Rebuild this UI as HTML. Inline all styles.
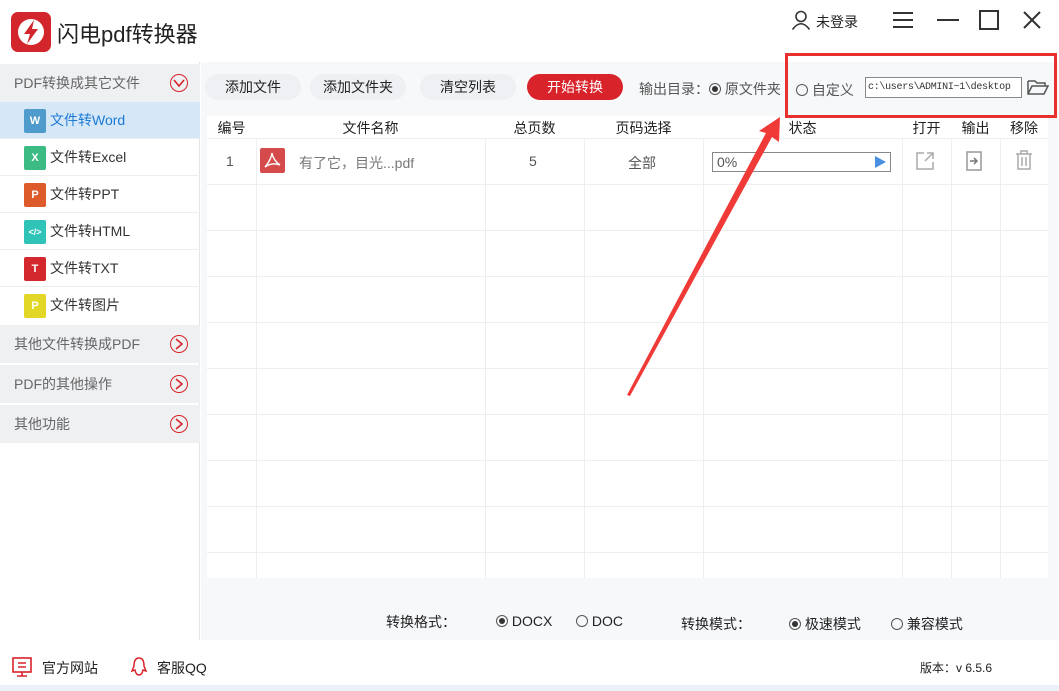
<!DOCTYPE html>
<html><head><meta charset="utf-8"><style>
*{margin:0;padding:0;box-sizing:border-box}
body{width:1059px;height:691px;position:relative;background:#fff;font-family:"Liberation Sans","Noto Sans CJK SC",sans-serif;color:#333;overflow:hidden;font-size:14px}
.a{position:absolute;white-space:nowrap}
.side{position:absolute;left:0;top:62px;width:200px;height:578px;background:#fff;border-right:1px solid #e3e5e8}
.grp{position:absolute;left:0;width:200px;height:38px;background:#eff0f2;color:#666;font-size:14px;line-height:38px;padding-left:14px}
.grp .c{position:absolute;left:170px;top:10px;width:18px;height:18px;border:1.6px solid #d9232a;border-radius:50%}
.item{position:absolute;left:0;width:200px;height:37px;border-bottom:1px solid #eceef0;font-size:14px;line-height:37px;padding-left:50px;color:#333}
.ic{position:absolute;left:24px;top:7px;width:22px;height:24px;border-radius:2px;color:#fff;font-size:11px;font-weight:bold;text-align:center;line-height:24px}
.main{position:absolute;left:201px;top:62px;width:858px;height:578px;background:#f7f8fa}
.btn{position:absolute;top:74px;height:26px;width:96px;border-radius:13px;background:#eef0f3;text-align:center;line-height:26px;font-size:14px;color:#222}
.tbl{position:absolute;left:207px;top:116px;width:841px;height:462px;background:#fff}
.hl{position:absolute;left:207px;width:841px;height:1px;background:#eceef0}
.vl{position:absolute;top:138px;width:1px;height:440px;background:#eceef0}
.th{position:absolute;top:118px;font-size:14px;color:#222;text-align:center}
.rad{display:inline-block;width:12px;height:12px;border:1px solid #555;border-radius:50%;vertical-align:-1px;position:relative}
.rad.on:after{content:"";position:absolute;left:2px;top:2px;width:6px;height:6px;border-radius:50%;background:#333}
</style></head><body>
<svg class="a" style="left:11px;top:12px" width="40" height="40" viewBox="0 0 40 40"><rect width="40" height="40" rx="7" fill="#d3262c"/><circle cx="20" cy="20" r="13" fill="#fff"/><path d="M23 8 L13 22 L19 22 L16 32 L27 17 L21 17 Z" fill="#d3262c"/></svg>
<div class="a" style="left:57px;top:17px;font-size:22px;color:#222">闪电pdf转换器</div>
<svg class="a" style="left:791px;top:10px" width="20" height="20" viewBox="0 0 20 20"><circle cx="10" cy="6.5" r="5" fill="none" stroke="#333" stroke-width="1.6"/><path d="M1.5 19.5 Q10 8 18.5 19.5" fill="none" stroke="#333" stroke-width="1.6"/></svg>
<div class="a" style="left:816px;top:12px;font-size:14px;color:#222">未登录</div>
<svg class="a" style="left:892px;top:11px" width="22" height="18"><path d="M1 2H21M1 9H21M1 16H21" stroke="#333" stroke-width="2"/></svg>
<svg class="a" style="left:936px;top:11px" width="24" height="18"><path d="M1 9H23" stroke="#333" stroke-width="2"/></svg>
<svg class="a" style="left:979px;top:10px" width="20" height="20"><rect x="1" y="1" width="18" height="18" fill="none" stroke="#333" stroke-width="2"/></svg>
<svg class="a" style="left:1022px;top:10px" width="20" height="20"><path d="M2 2L18 18M18 2L2 18" stroke="#333" stroke-width="2"/></svg>
<div class="side">
<div class="grp" style="top:2px;height:38px">PDF转换成其它文件<span class="c" style="top:10px"><svg style="position:absolute;left:2px;top:3px" width="12" height="10"><path d="M1 2L6 8L11 2" fill="none" stroke="#d9232a" stroke-width="1.6"/></svg></span></div>
<div class="item" style="top:40px;background:#d6e8f8;color:#1a7ad6">文件转Word<span class="ic" style="background:#4f9ccc">W</span></div>
<div class="item" style="top:77px">文件转Excel<span class="ic" style="background:#3dbb84">X</span></div>
<div class="item" style="top:114px">文件转PPT<span class="ic" style="background:#dd5a2a">P</span></div>
<div class="item" style="top:151px">文件转HTML<span class="ic" style="background:#30c3b8;font-size:9px">&lt;/&gt;</span></div>
<div class="item" style="top:188px">文件转TXT<span class="ic" style="background:#d3292e">T</span></div>
<div class="item" style="top:225px;border:none">文件转图片<span class="ic" style="background:#e2d626">P</span></div>
<div class="grp" style="top:263px">其他文件转换成PDF<span class="c"><svg style="position:absolute;left:3px;top:2px" width="10" height="12"><path d="M2 1L8 6L2 11" fill="none" stroke="#d9232a" stroke-width="1.6"/></svg></span></div>
<div class="grp" style="top:303px">PDF的其他操作<span class="c"><svg style="position:absolute;left:3px;top:2px" width="10" height="12"><path d="M2 1L8 6L2 11" fill="none" stroke="#d9232a" stroke-width="1.6"/></svg></span></div>
<div class="grp" style="top:343px">其他功能<span class="c"><svg style="position:absolute;left:3px;top:2px" width="10" height="12"><path d="M2 1L8 6L2 11" fill="none" stroke="#d9232a" stroke-width="1.6"/></svg></span></div>
</div>
<div class="main"></div>
<div class="btn" style="left:205px">添加文件</div>
<div class="btn" style="left:310px">添加文件夹</div>
<div class="btn" style="left:420px">清空列表</div>
<div class="btn" style="left:527px;background:#d9232a;color:#fff">开始转换</div>
<div class="a" style="left:639px;top:79px;color:#555">输出目录：<span class="rad on"></span> 原文件夹</div>
<div class="a" style="left:796px;top:80px;color:#555"><span class="rad"></span> 自定义</div>
<div class="a" style="left:865px;top:77px;width:157px;height:21px;border:1px solid #888;background:#fff;font-family:'Liberation Mono',monospace;font-size:10px;letter-spacing:-0.3px;line-height:19px;padding-left:2px;color:#333;overflow:hidden">c:\users\ADMINI~1\desktop</div>
<svg class="a" style="left:1027px;top:78px" width="22" height="18"><path d="M1 3H8L10 5H18V8M1 3V16H17L21 8H5L1 16" fill="none" stroke="#555" stroke-width="1.5"/></svg>
<div class="tbl"></div>
<div class="th" style="left:207px;width:49px">编号</div>
<div class="th" style="left:256px;width:229px">文件名称</div>
<div class="th" style="left:485px;width:99px">总页数</div>
<div class="th" style="left:584px;width:119px">页码选择</div>
<div class="th" style="left:703px;width:199px">状态</div>
<div class="th" style="left:902px;width:49px">打开</div>
<div class="th" style="left:951px;width:49px">输出</div>
<div class="th" style="left:1000px;width:48px">移除</div>
<div class="hl" style="top:138px"></div><div class="hl" style="top:184px"></div><div class="hl" style="top:230px"></div><div class="hl" style="top:276px"></div><div class="hl" style="top:322px"></div><div class="hl" style="top:368px"></div><div class="hl" style="top:414px"></div><div class="hl" style="top:460px"></div><div class="hl" style="top:506px"></div><div class="hl" style="top:552px"></div>
<div class="vl" style="left:256px"></div><div class="vl" style="left:485px"></div><div class="vl" style="left:584px"></div><div class="vl" style="left:703px"></div><div class="vl" style="left:902px"></div><div class="vl" style="left:951px"></div><div class="vl" style="left:1000px"></div>
<div class="a" style="left:226px;top:153px;color:#555">1</div>
<svg class="a" style="left:260px;top:148px" width="25" height="25"><rect width="25" height="25" rx="2" fill="#d54a4a"/><path d="M12 5Q11 12 5 19Q12 14 20 17Q13 12 12 5Z" fill="none" stroke="#fff" stroke-width="1.4"/></svg>
<div class="a" style="left:299px;top:153px;color:#777">有了它，目光...pdf</div>
<div class="a" style="left:529px;top:153px;color:#555">5</div>
<div class="a" style="left:628px;top:153px;color:#555">全部</div>
<div class="a" style="left:712px;top:152px;width:179px;height:20px;border:1px solid #888;background:#fff;color:#555;padding-left:4px;line-height:18px">0%<svg style="position:absolute;right:4px;top:3px" width="11" height="12"><path d="M0 0L11 6L0 12Z" fill="#4a90e2"/></svg></div>
<svg class="a" style="left:915px;top:151px" width="20" height="20"><path d="M9 2H2V18H18V11M12 2H18V8M18 2L10 10" fill="none" stroke="#aaa" stroke-width="1.5"/></svg>
<svg class="a" style="left:966px;top:151px" width="16" height="20"><rect x="1" y="1" width="14" height="18" fill="none" stroke="#999" stroke-width="1.5"/><path d="M4 10H11M8 7L11 10L8 13" fill="none" stroke="#777" stroke-width="1.5"/></svg>
<svg class="a" style="left:1015px;top:150px" width="18" height="20"><path d="M1 4H17M6 4V1H12V4M3 4V19H15V4M7 7V16M11 7V16" fill="none" stroke="#aaa" stroke-width="1.5"/></svg>
<div class="a" style="left:386px;top:612px;color:#222">转换格式：</div>
<div class="a" style="left:496px;top:613px;color:#222"><span class="rad on"></span> DOCX</div>
<div class="a" style="left:576px;top:613px;color:#222"><span class="rad"></span> DOC</div>
<div class="a" style="left:681px;top:614px;color:#222">转换模式：</div>
<div class="a" style="left:789px;top:614px;color:#222"><span class="rad on"></span> 极速模式</div>
<div class="a" style="left:891px;top:614px;color:#222"><span class="rad"></span> 兼容模式</div>
<svg class="a" style="left:12px;top:657px" width="20" height="20"><rect x="1" y="1" width="18" height="14" fill="none" stroke="#d9232a" stroke-width="1.6"/><path d="M6 6H14M6 10H14M10 15V19M5 19H15" stroke="#d9232a" stroke-width="1.6"/></svg>
<div class="a" style="left:42px;top:658px;color:#222">官方网站</div>
<svg class="a" style="left:130px;top:656px" width="18" height="22"><path d="M9 2C4 2 4 8 4 10L2 15L5 14Q6 19 9 19Q12 19 13 14L16 15L14 10C14 8 14 2 9 2Z" fill="none" stroke="#d9232a" stroke-width="1.5"/></svg>
<div class="a" style="left:157px;top:658px;color:#222">客服QQ</div>
<div class="a" style="left:920px;top:659px;font-size:12px;color:#222">版本：v 6.5.6</div>
<div class="a" style="left:0;top:685px;width:1059px;height:6px;background:#eaf1f8"></div>
<div class="a" style="left:785px;top:53px;width:272px;height:65px;border:3px solid #e8302f"></div>
<svg class="a" style="left:0;top:0" width="1059" height="691"><polygon points="627,395 766,133 759,131 780,117 779,142 772,137 630,396" fill="#f03a37"/></svg>
</body></html>
